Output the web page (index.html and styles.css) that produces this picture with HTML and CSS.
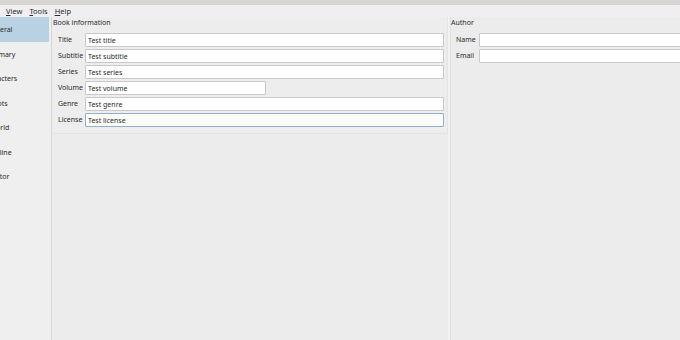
FILE: index.html
```html
<!DOCTYPE html>
<html lang="en">
<head>
    <meta charset="UTF-8">
    <title>Book settings</title>
    <link rel="stylesheet" href="styles.css">
</head>
<body>

    <div class="titlebar"></div>

    <div class="menubar">
        <span class="menu"><u>V</u>iew</span>
        <span class="menu"><u>T</u>ools</span>
        <span class="menu"><u>H</u>elp</span>
    </div>

    <div class="window">
        <ul class="sidebar">
            <li class="selected"><span>General</span></li>
            <li><span>Summary</span></li>
            <li><span>Characters</span></li>
            <li><span>Plots</span></li>
            <li><span>World</span></li>
            <li><span>Outline</span></li>
            <li><span>Editor</span></li>
        </ul>

        <div class="content">
            <section class="group book">
                <h2>Book information</h2>
                <div class="form">
                    <label for="title">Title</label>
                    <input type="text" id="title" value="Test title">
                    <label for="subtitle">Subtitle</label>
                    <input type="text" id="subtitle" value="Test subtitle">
                    <label for="series">Series</label>
                    <input type="text" id="series" value="Test series">
                    <label for="volume">Volume</label>
                    <input type="text" id="volume" class="short" value="Test volume">
                    <label for="genre">Genre</label>
                    <input type="text" id="genre" value="Test genre">
                    <label for="license">License</label>
                    <input type="text" id="license" class="focused" value="Test license">
                </div>
            </section>

            <section class="group author">
                <h2>Author</h2>
                <div class="form">
                    <label for="name">Name</label>
                    <input type="text" id="name">
                    <label for="email">Email</label>
                    <input type="text" id="email">
                </div>
            </section>
        </div>
    </div>

</body>
</html>
```

FILE: styles.css
```css
html, body {
    margin: 0;
    height: 100%;
    overflow: hidden;
}
body {
    font-family: "Noto Sans", sans-serif;
    font-size: 7px;
    color: #2a2a2a;
    background-color: #ececec;
    display: flex;
    flex-direction: column;
}
.titlebar {
    height: 5px;
    background-color: #d6d5d1;
}
.menubar {
    height: 12px;
    line-height: 13px;
    padding-left: 6px;
    display: flex;
    gap: 7px;
    font-size: 7.5px;
    background-color: #efefef;
}
.window {
    flex: 1;
    display: flex;
    min-width: 0;
}
.sidebar {
    flex-shrink: 0;
    list-style: none;
    margin: 0 1px 0 0;
    padding: 0;
    width: 51px;
    overflow: hidden;
    background-color: #efefef;
    border-right: 1px solid #d6d6d6;
}
/* the list is cut at the left edge, labels stay centred just left of x = 0 */
.sidebar li {
    height: 24.5px;
    margin-right: 2px;
    padding-right: 47px;
    display: flex;
    justify-content: center;
    align-items: center;
    white-space: nowrap;
}
.sidebar li span {
    flex-shrink: 0;
    padding-top: 1px;
    margin-left: -3px;
}
.sidebar li.selected {
    background-color: #b8d2e4;
}
.content {
    flex: 1;
    min-width: 0;
    overflow: hidden;
    display: flex;
}
.group h2 {
    font-size: 7px;
    font-weight: normal;
    margin: 0;
    height: 16px;
    line-height: 12px;
}
.book {
    flex-shrink: 0;
    width: 394px;
    height: 116px;
    border-right: 1px solid #e4e4e4;
    border-bottom: 1px solid #e4e4e4;
    background-color: #ededed;
}
.author {
    flex: 1;
    padding-left: 1px;
    border-left: 2px solid #f1f1f1;
    box-shadow: inset 1px 0 0 #e0e0e0;
}
.form {
    display: grid;
    grid-template-columns: 27px 1fr;
    row-gap: 2px;
    padding-left: 5px;
    align-items: center;
}
.book .form {
    padding-right: 3px;
}
.author .form {
    grid-template-columns: 23px 1fr;
}
label {
    line-height: 14px;
}
input[type="text"] {
    box-sizing: border-box;
    height: 14px;
    width: 100%;
    padding: 0 2px;
    margin: 0;
    font-family: inherit;
    font-size: 7px;
    color: #2a2a2a;
    background-color: #fff;
    border: 1px solid #c9c9c9;
    border-radius: 1px;
    outline: none;
}
.author input[type="text"] {
    width: 260px;
}
input.short {
    width: 181px;
}
input.focused {
    border-color: #93b0c8;
    background-color: #fcfdf8;
}
```
